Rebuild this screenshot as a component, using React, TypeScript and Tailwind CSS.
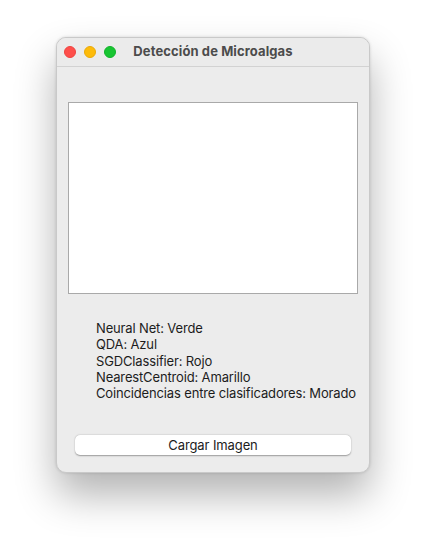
import React from "react";

export default function App() {
  const lines = [
    "Neural Net: Verde",
    "QDA: Azul",
    "SGDClassifier: Rojo",
    "NearestCentroid: Amarillo",
    "Coincidencias entre clasificadores: Morado",
  ];
  return (
    <div
      className="w-[426px] h-[548px] bg-white pl-[56px] pt-[37px]"
      style={{ fontFamily: "Inter, 'Liberation Sans', sans-serif" }}
    >
      <div className="w-[314px] h-[436px] rounded-[10px] bg-[#ececec] border border-[#c9c9c9] shadow-[0_22px_40px_rgba(0,0,0,0.3),0_0_3px_rgba(0,0,0,0.15)] flex flex-col overflow-hidden">
        <div className="relative h-[29px] shrink-0 border-b border-[#d2d2d2] bg-[#ebebeb] flex items-center justify-center">
          <div className="absolute left-[7px] top-[8px] flex gap-[8px]">
            <span className="w-[12px] h-[12px] rounded-full bg-[#fe4f4b] border border-[#ee4440]" />
            <span className="w-[12px] h-[12px] rounded-full bg-[#fdbb0a] border border-[#eaa908]" />
            <span className="w-[12px] h-[12px] rounded-full bg-[#18c532] border border-[#12b22a]" />
          </div>
          <span className="text-[13px] font-bold text-[#4c4c4c] tracking-[0.1px]">Detección de Microalgas</span>
        </div>
        <div className="flex flex-col pl-[11px] pt-[35px]">
          <div className="w-[290px] h-[192px] bg-white border border-[#a9a9a9]" />
          <div className="mt-[26px] ml-[28px] text-[13px] leading-[16.3px] tracking-[-0.15px] text-[#1c1c1c]">
            {lines.map((l) => (
              <div key={l}>{l}</div>
            ))}
          </div>
          <button className="mt-[34px] ml-[7px] w-[276px] h-[20px] bg-white rounded-[5px] text-[13px] tracking-[-0.1px] text-[#1c1c1c] shadow-[0_0.5px_1.5px_rgba(0,0,0,0.35)] flex items-center justify-center">
            Cargar Imagen
          </button>
        </div>
      </div>
    </div>
  );
}
